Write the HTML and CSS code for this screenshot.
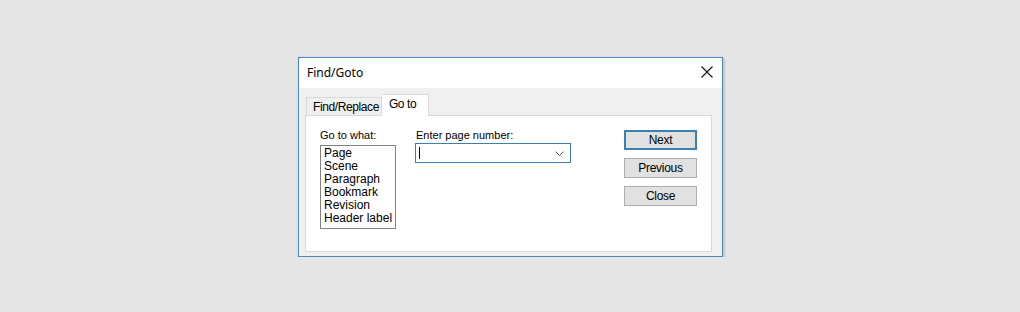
FILE: index.html
```html
<!DOCTYPE html>
<html>
<head>
    <title>Find/Goto</title>
    <link rel="stylesheet" href="styles.css">
</head>
<body>
    <div class="dialog">
        <div class="titlebar">
            <span class="title">Find/Goto</span>
            <svg class="close-x" width="12" height="12" viewBox="0 0 12 12">
                <path d="M0.5 0.5 L11.5 11.5 M11.5 0.5 L0.5 11.5" stroke="#111" stroke-width="1.1" fill="none"/>
            </svg>
        </div>
        <div class="body">
            <div class="tabs">
                <div class="tab">Find/Replace</div>
                <div class="tab active">Go to</div>
            </div>
            <div class="panel">
                <div class="col-what">
                    <div class="label">Go to what:</div>
                    <div class="listbox">
                        <div>Page</div>
                        <div>Scene</div>
                        <div>Paragraph</div>
                        <div>Bookmark</div>
                        <div>Revision</div>
                        <div>Header label</div>
                    </div>
                </div>
                <div class="col-page">
                    <div class="label">Enter page number:</div>
                    <div class="combo">
                        <span class="caret"></span>
                        <svg class="chevron" width="9" height="5" viewBox="0 0 9 5">
                            <path d="M0.5 0.5 L4.5 4.5 L8.5 0.5" stroke="#555" stroke-width="1" fill="none"/>
                        </svg>
                    </div>
                </div>
                <div class="buttons">
                    <button class="btn default">Next</button>
                    <button class="btn">Previous</button>
                    <button class="btn">Close</button>
                </div>
            </div>
        </div>
    </div>
</body>
</html>
```

FILE: styles.css
```css
body {
    margin: 0;
    background-color: #e6e6e6;
    font-family: "Liberation Sans", Arial, sans-serif;
    font-size: 11px;
    color: #000;
}

.dialog {
    width: 423px;
    height: 198px;
    margin: 57px 0 0 298px;
    border: 1px solid #4a88bd;
    background-color: #f0f0f0;
    box-shadow: 1px 1px 3px rgba(0,0,0,0.25);
    display: flex;
    flex-direction: column;
}

.titlebar {
    height: 30px;
    background-color: #fff;
    display: flex;
    align-items: center;
    justify-content: space-between;
    padding: 0 9px 0 8px;
}

.title {
    font-family: "Noto Sans", "Open Sans", sans-serif;
    font-size: 12px;
    margin-top: -1px;
}

.close-x {
    margin-top: -2px;
}

.body {
    flex: 1;
    padding: 6px 10px 4px 6px;
    display: flex;
    flex-direction: column;
}

.tabs {
    display: flex;
    align-items: flex-end;
    height: 21px;
    position: relative;
    z-index: 1;
    margin-left: 1px;
}

.tab {
    height: 17px;
    line-height: 19px;
    padding: 0 2px 0 6px;
    border: 1px solid #d9d9d9;
    border-bottom: none;
    background-color: #f0f0f0;
    font-size: 12px;
    letter-spacing: -0.4px;
}

.tab.active {
    height: 21px;
    line-height: 19px;
    padding: 0 12px 0 7px;
    background-color: #fff;
    margin-bottom: -1px;
    border-left: none;
}

.panel {
    flex: 1;
    background-color: #fff;
    border: 1px solid #d9d9d9;
    display: flex;
    padding: 13px 14px 0 14px;
}

.label {
    font-size: 11px;
    line-height: 13px;
    margin-bottom: 3px;
}

.col-what .label {
    margin-bottom: 3px;
}

.listbox {
    width: 76px;
    height: 84px;
    border: 1px solid #828282;
    padding: 1px 0 0 3px;
    box-sizing: border-box;
    font-size: 12px;
    line-height: 13px;
}

.col-page {
    margin-left: 19px;
}

.col-page .label {
    margin-bottom: 1px;
    padding-left: 1px;
}

.combo {
    width: 156px;
    height: 20px;
    border: 1px solid #3c7fb1;
    box-sizing: border-box;
    display: flex;
    align-items: center;
    justify-content: space-between;
    padding: 0 6px 0 3px;
}

.caret {
    width: 1px;
    height: 12px;
    background-color: #000;
}

.buttons {
    margin-left: auto;
    display: flex;
    flex-direction: column;
    gap: 8px;
    margin-top: 1px;
}

.btn {
    width: 73px;
    height: 20px;
    background-color: #e1e1e1;
    border: 1px solid #adadad;
    font-family: "Liberation Sans", Arial, sans-serif;
    font-size: 12px;
    letter-spacing: -0.3px;
    padding: 0;
    color: #000;
}

.btn.default {
    border: 2px solid #3c7fb1;
}
```
